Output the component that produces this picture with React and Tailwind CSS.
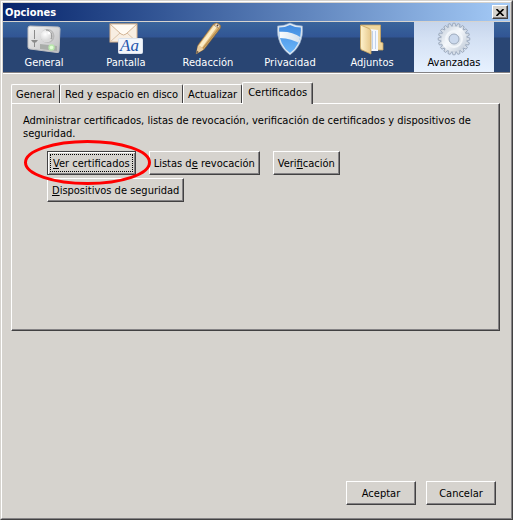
import React, { useState } from 'react'

const raised = 'border border-t-white border-l-white border-r-[#424142] border-b-[#424142] shadow-[inset_-1px_-1px_0_#848284]'

function GeneralIcon() {
  return (
    <svg width="34" height="30" viewBox="0 0 34 30" aria-hidden="true">
      <defs>
        <linearGradient id="panelFill" x1="0" y1="0" x2="1" y2="1">
          <stop offset="0" stopColor="#f4f4f4" />
          <stop offset="1" stopColor="#bcbcbe" />
        </linearGradient>
        <radialGradient id="knob" cx="0.4" cy="0.35">
          <stop offset="0" stopColor="#fff" />
          <stop offset="1" stopColor="#dadada" />
        </radialGradient>
      </defs>
      <path d="M3 2 L31 3 Q33 3 33 5 L32 27 Q32 29 30 28.500 L3 25 Q1 25 1 23 L1 4 Q1 2 3 2Z" fill="url(#panelFill)" stroke="#bdbec2" />
      <path d="M7.500 6v9M7.500 18v5" stroke="#8b8b8b" strokeWidth="1" />
      <path d="M4 16h7l-2 2.500h-3z" fill="#8b8b8b" />
      <circle cx="20.500" cy="12" r="7" fill="#b9b9b9" />
      <circle cx="19.500" cy="12" r="6.300" fill="url(#knob)" />
      <path d="M19 6 A6 6 0 0 1 24 15" fill="none" stroke="#8a8a8a" strokeWidth="1" />
      <circle cx="22" cy="9" r="1.500" fill="#fff" />
      <path d="M13 20l17 2v5l-17-2z" fill="#a9ada9" />
      <circle cx="24.500" cy="23.500" r="3.200" fill="#b9e7ad" />
      <circle cx="24.500" cy="23.500" r="1.800" fill="#e2ffd6" />
    </svg>
  )
}

function PantallaIcon() {
  return (
    <svg width="34" height="32" viewBox="0 0 34 32" aria-hidden="true">
      <rect x="1" y="1" width="27" height="18" fill="#f8eee2" stroke="#d9b48d" />
      <path d="M1 19l10-9M28 19l-10-9" stroke="#dcc4aa" />
      <path d="M1 1l11 10q2.500 2 5 0l11-10z" fill="#fffaf3" stroke="#c8a580" strokeWidth="0.8" />
      <rect x="9.500" y="15.500" width="24" height="15" rx="1" fill="#f3f6fb" stroke="#dbe3ee" />
      <text x="11" y="28" fill="#2355ad" fontSize="17" fontStyle="italic" fontFamily="'Liberation Serif', serif">Aa</text>
    </svg>
  )
}

function PencilIcon() {
  return (
    <svg width="28" height="34" viewBox="0 0 28 34" aria-hidden="true">
      <path d="M2 32 L4 23 L19 2.500 Q22 0.500 25 2 Q27.500 3.500 26.500 6 L10 27.500Z" fill="#e0b878" stroke="#7d5d34" strokeWidth="0.6" />
      <path d="M5 23.500L20 3.500l3 1.500L8 25.500z" fill="#fbecc6" />
      <path d="M9.300 27L26 6l-1-0.700L8.500 26z" fill="#b89050" />
      <path d="M2 32L4 23.500l2.500 1 3 3z" fill="#e9cda0" />
      <path d="M2 32l0.800-3.500 2 1.500z" fill="#6a5a48" />
      <ellipse cx="23.300" cy="3.500" rx="2.800" ry="1.800" transform="rotate(35 23.300 3.500)" fill="#f7e7d3" stroke="#9a7748" strokeWidth="0.6" />
      <circle cx="23.500" cy="3.500" r="0.900" fill="#4a4038" />
    </svg>
  )
}

function ShieldIcon() {
  return (
    <svg width="28" height="34" viewBox="0 0 28 34" aria-hidden="true">
      <defs>
        <linearGradient id="shieldFill" x1="0" y1="0" x2="0" y2="1">
          <stop offset="0" stopColor="#3d86dd" />
          <stop offset="1" stopColor="#6fbafb" />
        </linearGradient>
        <linearGradient id="band" x1="0" y1="0" x2="1" y2="0">
          <stop offset="0" stopColor="#fff" />
          <stop offset="1" stopColor="#cfdcea" />
        </linearGradient>
        <clipPath id="shieldClip">
          <path d="M14 3Q19 5.500 24.800 5.500Q26 22 14 31Q2 22 3.200 5.500Q9 5.500 14 3Z" />
        </clipPath>
      </defs>
      <path d="M14 1Q20 4 26.500 4Q28 23 14 33Q0 23 1.500 4Q8 4 14 1Z" fill="#dde8f3" stroke="#8ca5c4" strokeWidth="0.6" />
      <g clipPath="url(#shieldClip)">
        <rect width="28" height="34" fill="url(#shieldFill)" />
        <path d="M1 10Q16 8 27 17V24Q16 15 1 16Z" fill="url(#band)" />
      </g>
    </svg>
  )
}

function FolderIcon() {
  return (
    <svg width="26" height="31" viewBox="0 0 26 31" aria-hidden="true">
      <defs>
        <linearGradient id="folderFill" x1="0" y1="0" x2="1" y2="0">
          <stop offset="0" stopColor="#fff3cd" />
          <stop offset="1" stopColor="#e6c78a" />
        </linearGradient>
      </defs>
      <path d="M2 1h19.500v17l2.500 1v7H2z" fill="#f0d79e" stroke="#c9a45f" strokeWidth="0.8" />
      <path d="M11 5l8 1v21h-8z" fill="#f4f8ff" />
      <path d="M13.500 7v18M16.500 7v18" stroke="#c3d3ea" />
      <path d="M1.500 1L10 4.500q2 1 2 3V30L3 26q-1.500-1-1.500-3z" fill="url(#folderFill)" stroke="#c9a45f" strokeWidth="0.8" />
    </svg>
  )
}

function GearIcon() {
  const teeth = Array.from({ length: 20 }, (_, i) => i * 18)
  return (
    <svg width="34" height="34" viewBox="0 0 34 34" aria-hidden="true">
      <defs>
        <linearGradient id="gearFill" x1="0" y1="0" x2="1" y2="1">
          <stop offset="0" stopColor="#c4cedb" />
          <stop offset="0.45" stopColor="#f6f9fc" />
          <stop offset="1" stopColor="#bcc7d5" />
        </linearGradient>
      </defs>
      {teeth.map(a => (
        <path key={a} d="M15 5L15.900 1.200h2.200L19 5z" fill="#d5dde7" stroke="#8c9bb0" strokeWidth="0.7" transform={`rotate(${a} 17 17)`} />
      ))}
      <circle cx="17" cy="17" r="12.800" fill="url(#gearFill)" />
      <circle cx="17" cy="17" r="8" fill="none" stroke="#f2f6fa" strokeWidth="2" />
      <circle cx="17" cy="17" r="5" fill="#cbd9ed" stroke="#9caabd" />
    </svg>
  )
}

const sections = [
  { name: 'General', icon: GeneralIcon },
  { name: 'Pantalla', icon: PantallaIcon },
  { name: 'Redacción', icon: PencilIcon },
  { name: 'Privacidad', icon: ShieldIcon },
  { name: 'Adjuntos', icon: FolderIcon },
  { name: 'Avanzadas', icon: GearIcon },
]

const tabs = ['General', 'Red y espacio en disco', 'Actualizar', 'Certificados']

function Button({ children, className = '' }) {
  return (
    <button type="button" className={`h-6 whitespace-nowrap ${raised} ${className}`}>
      {children}
    </button>
  )
}

export default function App() {
  const [section, setSection] = useState('Avanzadas')
  const [tab, setTab] = useState('Certificados')

  return (
    <div className="min-h-screen flex flex-col bg-[#d6d3ce] border border-t-[#d6d3ce] border-l-[#d6d3ce] border-r-[#424142] border-b-[#424142] text-black text-[11px] leading-[13px] font-['DejaVu_Sans_Condensed','DejaVu_Sans',sans-serif]">
      <div className="flex-1 flex flex-col p-px border border-t-white border-l-white border-r-[#848284] border-b-[#848284]">
        <header className="h-[18px] flex items-center justify-between pl-0.5 pr-0.5 bg-linear-to-r from-[#08246b] to-[#a5cbf7] text-white">
          <h1 className="font-bold">Opciones</h1>
          <button type="button" aria-label="Cerrar" className={`w-4 h-[14px] flex items-center justify-center bg-[#d6d3ce] ${raised}`}>
            <svg width="8" height="7" viewBox="0 0 8 7" aria-hidden="true">
              <path d="M0.500 0L7.500 7M7.500 0L0.500 7" stroke="#000" strokeWidth="1.600" />
            </svg>
          </button>
        </header>

        <nav className="flex gap-0.5 pl-px mt-px border-b border-[#848284] bg-linear-to-b from-[#3a659c] from-0% via-[#315594] via-30% to-[#294573] to-32%">
          {sections.map(({ name, icon: Icon }) => (
            <button
              key={name}
              type="button"
              onClick={() => setSection(name)}
              className={`w-20 h-[50px] flex flex-col items-center ${section === name ? 'text-black bg-linear-to-b from-[#c6d5eb] via-[#d3e0f3] via-32% to-[#e7f1ff]' : 'text-white'}`}
            >
              <span className="h-[34px] flex items-center"><Icon /></span>
              <span>{name}</span>
            </button>
          ))}
        </nav>

        <main className="flex-1 flex flex-col border-t border-white px-2 pt-2 pb-3">
          <div role="tablist" className="flex items-end">
            {tabs.map(t => (
              <button
                key={t}
                type="button"
                role="tab"
                aria-selected={tab === t}
                onClick={() => setTab(t)}
                className={`whitespace-nowrap rounded-t-xs border border-b-0 border-t-white border-l-white border-r-[#424142] ${tab === t ? 'relative h-[22px] -mb-px pb-0.5 px-[5px] bg-[#d6d3ce] shadow-[inset_-1px_0_0_#848284]' : 'h-[19px] px-1'}`}
              >
                {t}
              </button>
            ))}
          </div>

          <section role="tabpanel" className={`min-h-[228px] mr-[2px] px-[11px] pt-[10px] ${raised}`}>
            <p>Administrar certificados, listas de revocación, verificación de certificados y dispositivos de seguridad.</p>
            <div className="flex flex-wrap gap-x-[13px] gap-y-[3px] pl-6 pt-[11px]">
              <div className="relative">
                <button type="button" className="h-6 whitespace-nowrap p-0.5 border border-[#424142] shadow-[inset_1px_1px_0_#fff,inset_-1px_-1px_0_#848284]">
                  <span className="h-full flex items-center px-0.5 border border-dotted border-black">
                    <span><u>V</u>er certificados</span>
                  </span>
                </button>
                <svg className="absolute -left-6 -top-[11px] pointer-events-none max-w-none" width="128" height="46" viewBox="0 0 128 46" aria-hidden="true">
                  <ellipse cx="64.500" cy="22.500" rx="62" ry="21" fill="none" stroke="#ff0000" strokeWidth="3" />
                </svg>
              </div>
              <Button className="px-1">Listas d<u>e</u> revocación</Button>
              <Button className="px-1">Veri<u>f</u>icación</Button>
              <Button className="px-1"><u>D</u>ispositivos de seguridad</Button>
            </div>
          </section>

          <footer className="mt-auto flex justify-end gap-[10px] pr-[6px]">
            <Button className="w-[70px]">Aceptar</Button>
            <Button className="w-[70px]">Cancelar</Button>
          </footer>
        </main>
      </div>
    </div>
  )
}
